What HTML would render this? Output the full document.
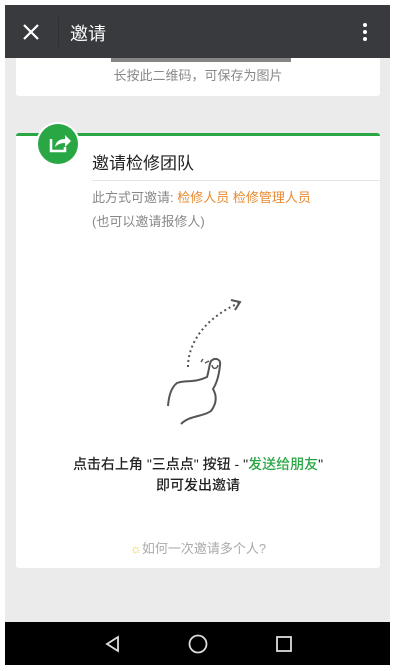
<!DOCTYPE html>
<html><head><meta charset="utf-8"><style>
*{margin:0;padding:0;box-sizing:border-box}
body{width:401px;height:671px;background:#fff;position:relative;overflow:hidden;font-family:"Liberation Sans","Noto Sans CJK SC",sans-serif}
#screen{position:absolute;left:5px;top:5px;width:385px;height:660px;background:#ebebeb;overflow:hidden}
.nav{position:absolute;left:0;top:0;width:385px;height:53px;background:#393a3e;color:#fff}
.card{position:absolute;left:11px;width:364px;background:#fff;border-radius:3px}
.t{position:absolute;white-space:nowrap}
.bot{position:absolute;left:0;top:617px;width:385px;height:43px;background:#000}
</style></head><body>
<div id="screen">
<div class="card" style="top:40px;height:51px">
 <div class="t" style="left:95px;top:13px;width:180px;height:4px;background:#333;opacity:.6"></div>
 <div class="t" style="left:0;width:364px;text-align:center;top:20px;font-size:13px;color:#888">长按此二维码，可保存为图片</div>
</div>
<div class="nav">
 <svg style="position:absolute;left:17px;top:18px" width="18" height="18"><path d="M2 2L16 16M16 2L2 16" stroke="#fff" stroke-width="2.2"/></svg>
 <div style="position:absolute;left:53px;top:12px;width:1px;height:30px;background:#2f3034"></div>
 <div class="t" style="left:65px;top:15px;font-size:18px;color:#fff">邀请</div>
 <div style="position:absolute;left:358px;top:18px;width:4px;height:4px;background:#fff;border-radius:2px;box-shadow:0 7px 0 #fff,0 14px 0 #fff"></div>
</div>
<div class="card" style="top:128px;height:435px;border-top:3px solid #2aa745">
 <div style="position:absolute;left:20px;top:-14px;width:44px;height:44px;border-radius:50%;background:#fff"></div>
 <div style="position:absolute;left:22px;top:-12px;width:40px;height:40px;border-radius:50%;background:#2aa745">
  <svg width="40" height="40"><path d="M13 15v12h14v-4" fill="none" stroke="#fff" stroke-width="2.5"/><path d="M17 23c1-6 5-8 10-8v-4l6 6-6 6v-4c-4 0-7 1-10 4z" fill="#fff"/></svg>
 </div>
 <div class="t" style="left:76px;top:13px;font-size:17px;color:#222">邀请检修团队</div>
 <div style="position:absolute;left:76px;right:0;top:44px;height:1px;background:#e5e5e5"></div>
 <div class="t" style="left:76px;top:51px;font-size:13px;color:#888">此方式可邀请: <span style="color:#e8892f">检修人员 检修管理人员</span></div>
 <div class="t" style="left:76px;top:75px;font-size:13px;color:#888">(也可以邀请报修人)</div>
 <svg style="position:absolute;left:129px;top:157px" width="110" height="140" viewBox="140 290 110 140">
  <path d="M183 364C183 340 200 315 234 300" fill="none" stroke="#555" stroke-width="2" stroke-dasharray="2 3"/>
  <path d="M226 297L235 299L230 307" fill="none" stroke="#555" stroke-width="2"/>
  <path d="M200 360L204 358M196 359L198 356" stroke="#555" stroke-width="1.5"/>
  <path d="M163 403C164 390 168 383 172 380C180 377 190 380 202 374C204 368 204 362 206 358C210 354 216 356 215 362C214 372 212 380 208 386C212 393 212 400 206 408C198 414 185 412 176 421" fill="none" stroke="#555" stroke-width="2"/>
  <path d="M207 362C208 367 212 366 213 362" fill="none" stroke="#555" stroke-width="1.5"/>
 </svg>
 <div class="t" style="left:0;width:364px;text-align:center;top:318px;font-size:14px;color:#222;line-height:21px;font-weight:500">点击右上角 "三点点" 按钮 - "<span style="color:#2aa745">发送给朋友</span>"<br>即可发出邀请</div>
 <div class="t" style="left:0;width:364px;text-align:center;top:402px;font-size:13px;color:#aaa"><span style="color:#f0d030">☼</span>如何一次邀请多个人?</div>
</div>
<div class="bot">
 <svg style="position:absolute;left:98px;top:12px" width="20" height="20"><path d="M15 3L4 10L15 17Z" fill="none" stroke="#ddd" stroke-width="1.8"/></svg>
 <svg style="position:absolute;left:182px;top:11px" width="22" height="22"><circle cx="11" cy="11" r="8.5" fill="none" stroke="#ddd" stroke-width="1.8"/></svg>
 <svg style="position:absolute;left:269px;top:12px" width="20" height="20"><rect x="3" y="3" width="14" height="14" fill="none" stroke="#ddd" stroke-width="1.8"/></svg>
</div>
</div>
</body></html>
